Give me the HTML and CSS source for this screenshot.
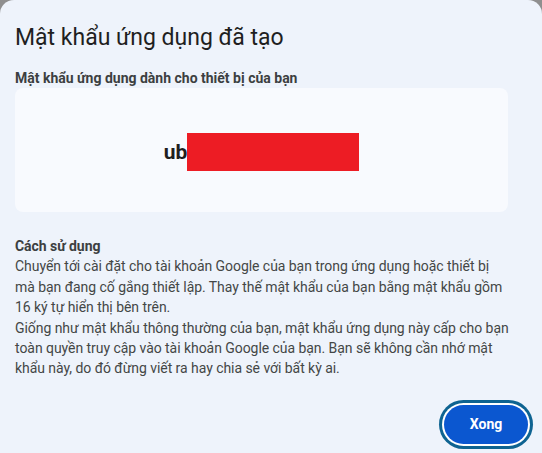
FILE: index.html
```html
<!DOCTYPE html>
<html lang="vi">
<head>
<meta charset="utf-8">
<link rel="stylesheet" href="styles.css">
</head>
<body>
<div class="dialog">
  <h1 class="title">Mật khẩu ứng dụng đã tạo</h1>
  <div class="label">Mật khẩu ứng dụng dành cho thiết bị của bạn</div>
  <div class="pwbox">
    <div class="pw"><span class="pw-text">ub</span><span class="redact"></span></div>
  </div>
  <div class="howto">
    <div class="howto-title">Cách sử dụng</div>
    <p class="howto-text">Chuyển tới cài đặt cho tài khoản Google của bạn trong ứng dụng hoặc thiết bị mà bạn đang cố gắng thiết lập. Thay thế mật khẩu của bạn bằng mật khẩu gồm 16 ký tự hiển thị bên trên.</p>
    <p class="howto-text">Giống như mật khẩu thông thường của bạn, mật khẩu ứng dụng này cấp cho bạn toàn quyền truy cập vào tài khoản Google của bạn. Bạn sẽ không cần nhớ mật khẩu này, do đó đừng viết ra hay chia sẻ với bất kỳ ai.</p>
  </div>
  <div class="actions">
    <button class="done">Xong</button>
  </div>
</div>
</body>
</html>
```
FILE: styles.css
```css
html, body {
  margin: 0;
  padding: 0;
  background: #8f8f8f;
  width: 542px;
  height: 453px;
  overflow: hidden;
}
.dialog {
  box-sizing: border-box;
  width: 542px;
  height: 470px;
  background: #eef3fb;
  border-radius: 14px 14px 0 0;
  padding: 22px 34px 0 15px;
  font-family: Roboto, "Noto Sans", sans-serif;
  color: #1f1f1f;
}
.title {
  margin: 0;
  font-weight: 400;
  font-size: 23px;
  line-height: 32px;
}
.label {
  margin-top: 14px;
  font-size: 14px;
  font-weight: 700;
  line-height: 20px;
  color: #3c3f41;
}
.pwbox {
  margin-top: 0;
  height: 124px;
  background: #f8fafe;
  border-radius: 8px;
  display: flex;
  align-items: center;
  justify-content: center;
}
.pw {
  display: flex;
  align-items: center;
  margin-top: 4px;
}
.pw-text {
  font-size: 21px;
  font-weight: 700;
  color: #1f1f1f;
}
.redact {
  display: block;
  width: 172px;
  height: 38px;
  background: #ed1c24;
}
.howto {
  margin-top: 24px;
  margin-right: -3px;
  color: #444746;
  font-size: 14px;
  letter-spacing: -0.05px;
  line-height: 20.4px;
}
.howto-title {
  font-weight: 700;
  color: #3c3f41;
}
.howto-text {
  margin: 0;
}
.actions {
  display: flex;
  justify-content: flex-end;
  margin-top: 26px;
  margin-right: -20px;
}
.done {
  width: 84px;
  height: 39px;
  border: none;
  border-radius: 20px;
  background: #0b57d0;
  color: #fff;
  font-family: Roboto, "Noto Sans", sans-serif;
  font-size: 14px;
  font-weight: 700;
  box-shadow: 0 0 0 2px #ffffff, 0 0 0 5px #0e6391;
}
```
